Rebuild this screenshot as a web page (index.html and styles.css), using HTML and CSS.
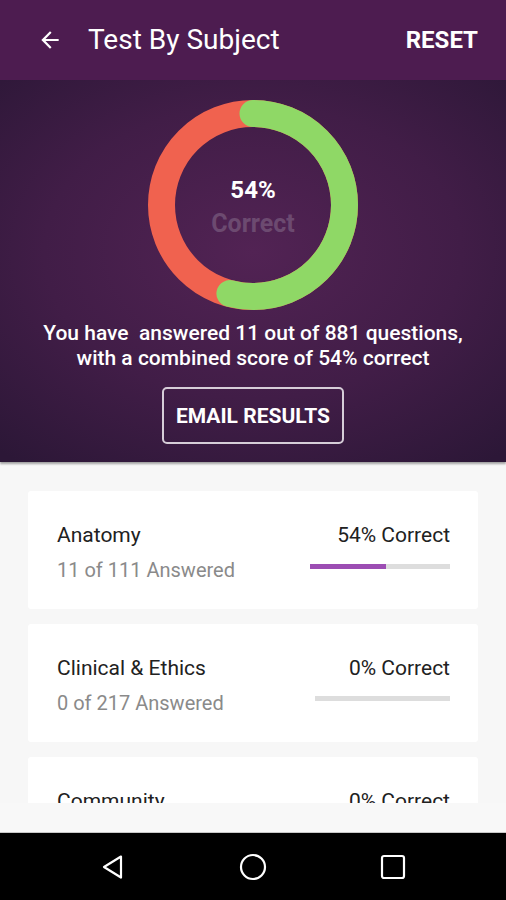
FILE: index.html
```html
<!DOCTYPE html>
<html lang="en">
<head>
  <meta charset="UTF-8" />
  <meta name="viewport" content="width=device-width, initial-scale=1.0"/>
  <title>Test By Subject</title>
  <link rel="stylesheet" href="styles.css">
</head>
<body>

  <div class="screen">
    <!-- app bar -->
    <div class="appbar">
      <svg class="back" width="26" height="26" viewBox="0 0 24 24">
        <path d="M20 11H7.83l5.59-5.59L12 4l-8 8 8 8 1.41-1.41L7.83 13H20v-2z" fill="#fff"/>
      </svg>
      <div class="appbar-title">Test By Subject</div>
      <div class="appbar-action">RESET</div>
    </div>

    <!-- summary -->
    <div class="summary">
      <div class="donut">
        <svg width="212" height="212" viewBox="0 0 212 212">
          <circle cx="106" cy="106" r="91.5" fill="none" stroke="#f0624f" stroke-width="27"/>
          <circle cx="106" cy="106" r="91.5" fill="none" stroke="#8fd866" stroke-width="27"
                  stroke-linecap="round" stroke-dasharray="310.4 574.9"
                  transform="rotate(-90 106 106)"/>
        </svg>
        <div class="donut-label">
          <div class="donut-pct">54%</div>
          <div class="donut-sub">Correct</div>
        </div>
      </div>
      <p class="summary-text">You have&nbsp; answered 11 out of 881 questions,<br>with a combined score of 54% correct</p>
      <button class="btn-outline">EMAIL RESULTS</button>
    </div>

    <!-- subjects -->
    <div class="list">
      <div class="card">
        <div class="card-left">
          <div class="card-title">Anatomy</div>
          <div class="card-sub">11 of 111 Answered</div>
        </div>
        <div class="card-right">
          <div class="card-score">54% Correct</div>
          <div class="bar"><div class="bar-fill" style="width: 54%"></div></div>
        </div>
      </div>

      <div class="card">
        <div class="card-left">
          <div class="card-title">Clinical &amp; Ethics</div>
          <div class="card-sub">0 of 217 Answered</div>
        </div>
        <div class="card-right">
          <div class="card-score">0% Correct</div>
          <div class="bar bar-short"><div class="bar-fill" style="width: 0%"></div></div>
        </div>
      </div>

      <div class="card">
        <div class="card-left">
          <div class="card-title">Community</div>
        </div>
        <div class="card-right">
          <div class="card-score">0% Correct</div>
        </div>
      </div>
    </div>
    <div class="list-edge"></div>

    <!-- android nav -->
    <div class="navbar">
      <svg width="26" height="26" viewBox="0 0 26 26">
        <path d="M21 2.5 L4 13 L21 23.5 Z" fill="none" stroke="#fff" stroke-width="2.2" stroke-linejoin="round"/>
      </svg>
      <svg width="28" height="28" viewBox="0 0 28 28">
        <circle cx="14" cy="14" r="12" fill="none" stroke="#fff" stroke-width="2.2"/>
      </svg>
      <svg width="26" height="26" viewBox="0 0 26 26">
        <rect x="2" y="2" width="22" height="22" rx="2" fill="none" stroke="#fff" stroke-width="2.2"/>
      </svg>
    </div>
  </div>

</body>
</html>
```

FILE: styles.css
```css
* {
  box-sizing: border-box;
}
body {
  margin: 0;
  font-family: Roboto, "Noto Sans", sans-serif;
  background-color: #000;
}
.screen {
  width: 506px;
  height: 900px;
  display: flex;
  flex-direction: column;
  overflow: hidden;
}
.appbar {
  height: 80px;
  flex: none;
  display: flex;
  align-items: center;
  padding: 0 28px 0 37px;
  background-color: #4d1c50;
  color: #fff;
}
.back {
  margin-right: 25px;
}
.appbar-title {
  flex: 1;
  font-size: 28px;
  padding-bottom: 1px;
}
.appbar-action {
  font-size: 24px;
  font-weight: bold;
  padding-bottom: 1px;
}
.summary {
  height: 382px;
  flex: none;
  display: flex;
  flex-direction: column;
  align-items: center;
  background: radial-gradient(ellipse 75% 70% at 50% 45%, #522354 0%, #411d47 55%, #2c1737 100%);
  box-shadow: 0 2px 2px rgba(0, 0, 0, 0.35);
  position: relative;
  z-index: 1;
}
.donut {
  position: relative;
  width: 212px;
  height: 212px;
  margin-top: 19px;
}
.donut svg {
  display: block;
}
.donut-label {
  position: absolute;
  inset: 0;
  display: flex;
  flex-direction: column;
  align-items: center;
  justify-content: center;
  font-weight: bold;
  line-height: 34px;
  padding-top: 3px;
}
.donut-pct {
  color: #fff;
  font-size: 24px;
}
.donut-sub {
  color: #6c4a70;
  font-size: 25px;
}
.summary-text {
  margin: 10px 0 0;
  color: #fff;
  font-size: 21px;
  font-weight: 500;
  line-height: 25px;
  text-align: center;
}
.btn-outline {
  margin-top: 16px;
  width: 182px;
  height: 57px;
  background: transparent;
  border: 2px solid #d6cdd8;
  border-radius: 5px;
  color: #fff;
  font-family: inherit;
  font-size: 21px;
  font-weight: bold;
}
.list {
  height: 341px;
  flex: none;
  overflow: hidden;
  background-color: #f7f7f7;
  padding: 29px 28px 0;
  display: flex;
  flex-direction: column;
  gap: 15px;
}
.card {
  flex: none;
  height: 118px;
  background-color: #fff;
  border-radius: 3px;
  display: flex;
  justify-content: space-between;
  padding: 31px 28px 0 29px;
}
.card-title {
  font-size: 21px;
  line-height: 26px;
  color: #212121;
}
.card-sub {
  margin-top: 10px;
  font-size: 20px;
  line-height: 24px;
  color: #8a8a8a;
}
.card-right {
  display: flex;
  flex-direction: column;
  align-items: flex-end;
}
.card-score {
  font-size: 21px;
  line-height: 26px;
  color: #212121;
}
.bar {
  margin-top: 16px;
  width: 140px;
  height: 5px;
  background-color: #dddddd;
}
.bar-short {
  width: 135px;
  margin-top: 15px;
}
.bar-fill {
  height: 100%;
  background-color: #9c4db3;
}
.list-edge {
  height: 30px;
  flex: none;
  background-color: #f8f8f8;
  border-bottom: 1px solid #c8c8c8;
}
.navbar {
  flex: 1;
  background-color: #000;
  display: flex;
  align-items: center;
  justify-content: center;
  gap: 113px;
}
```
